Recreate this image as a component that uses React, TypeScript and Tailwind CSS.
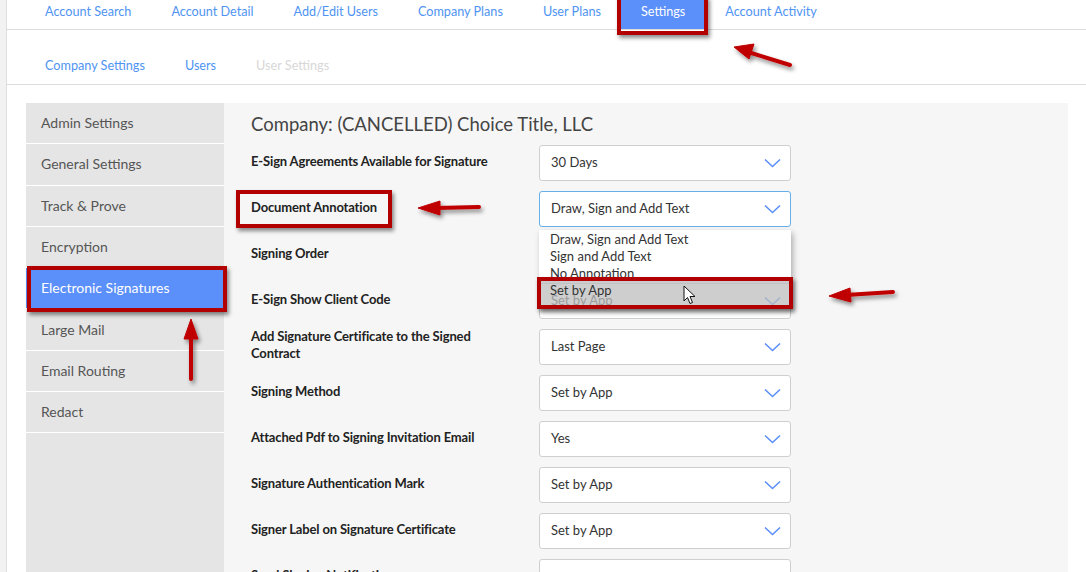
import React from 'react';

const topTabs = ['Account Search', 'Account Detail', 'Add/Edit Users', 'Company Plans', 'User Plans', 'Settings', 'Account Activity'];

const sideItems = [
  'Admin Settings',
  'General Settings',
  'Track & Prove',
  'Encryption',
  'Electronic Signatures',
  'Large Mail',
  'Email Routing',
  'Redact',
];

const rows = [
  { label: 'E-Sign Agreements Available for Signature', value: '30 Days' },
  { label: 'Document Annotation', value: 'Draw, Sign and Add Text', focused: true },
  { label: 'Signing Order', value: 'Set by App' },
  { label: 'E-Sign Show Client Code', value: 'Set by App' },
  { label: 'Add Signature Certificate to the Signed Contract', value: 'Last Page' },
  { label: 'Signing Method', value: 'Set by App' },
  { label: 'Attached Pdf to Signing Invitation Email', value: 'Yes' },
  { label: 'Signature Authentication Mark', value: 'Set by App' },
  { label: 'Signer Label on Signature Certificate', value: 'Set by App' },
  { label: 'Send Signing Notification', value: '' },
];

const Chevron = () => (
  <svg width="17" height="10" viewBox="0 0 17 10" fill="none">
    <polyline points="1,1.5 8.5,8.5 16,1.5" stroke="#5b8ff9" strokeWidth="1.6" />
  </svg>
);

const Select = ({ value, focused }: { value: string; focused?: boolean }) => (
  <div
    className={`w-[252px] h-[36px] bg-white rounded-[3px] border flex items-center justify-between pl-[11px] pr-[9px] text-[13px] text-[#333] ${
      focused ? 'border-[#66afe9]' : 'border-[#cfcfcf]'
    }`}
  >
    <span>{value}</span>
    <Chevron />
  </div>
);

const RedBox = ({ className }: { className: string }) => (
  <div className={`absolute border-[4px] border-[#b20000] shadow-[2px_3px_4px_rgba(0,0,0,0.45)] pointer-events-none ${className}`} />
);

export default function App() {
  return (
    <div className="relative w-[1086px] h-[572px] overflow-hidden flex bg-white font-['Lato','Open_Sans',sans-serif]">
      <div className="w-[7px] bg-[#f2f2f2] border-r border-[#dedede]" />
      <div className="flex-1 flex flex-col">
        <nav className="h-[30px] border-b border-[#dcdcdc] flex pl-[18px] text-[12.65px] text-[#4f94f2]">
          {topTabs.map((t) => (
            <div
              key={t}
              className={`px-5 flex items-center pb-[4px] ${t === 'Settings' ? 'bg-[#5b8ff9] text-white' : ''}`}
            >
              {t}
            </div>
          ))}
        </nav>
        <nav className="h-[55px] border-b border-[#dcdcdc] flex items-end pb-[8px] pl-[18px] text-[12.65px]">
          <div className="px-5 text-[#4f94f2]">Company Settings</div>
          <div className="px-5 text-[#4f94f2]">Users</div>
          <div className="px-5 text-[#d8d8d8]">User Settings</div>
        </nav>
        <div className="flex-1 flex pt-[18px] pl-[19px] pr-[18px] min-h-0">
          <aside className="w-[198px] bg-[#e5e5e5]">
            {sideItems.map((s) => (
              <div
                key={s}
                className={`h-[41.3px] flex items-center pl-[15px] pb-[1px] text-[14px] border-b border-white ${
                  s === 'Electronic Signatures' ? 'bg-[#5b8ff9] text-white' : 'text-[#555]'
                }`}
              >
                {s}
              </div>
            ))}
          </aside>
          <main className="flex-1 bg-[#f6f6f6] pl-[27px] pt-[8px]">
            <h1 className="text-[18.5px] leading-[26px] text-[#444] mb-[8px]">Company: (CANCELLED) Choice Title, LLC</h1>
            <div className="flex flex-col gap-[10px]">
              {rows.map((r) => (
                <div key={r.label} className="flex items-center">
                  <div className="w-[288px] pr-[36px] -mt-[4px] text-[13px] leading-[17px] font-bold text-[#222] tracking-[-0.15px]">
                    {r.label}
                  </div>
                  <Select value={r.value} focused={r.focused} />
                </div>
              ))}
            </div>
          </main>
        </div>
      </div>

      {/* open dropdown list */}
      <div className="absolute left-[539px] top-[230px] w-[252px] shadow-[2px_3px_6px_rgba(0,0,0,0.3)]">
        <div className="bg-white h-[50px] overflow-hidden pl-[11px] pt-[1px] text-[13px] leading-[17px] text-[#333]">
          <div>Draw, Sign and Add Text</div>
          <div>Sign and Add Text</div>
          <div>No Annotation</div>
        </div>
        <div className="h-[28px] bg-[#bdbdbd]/75 pl-[11px] text-[13px] leading-[17px] text-[#333] pt-[2px]">Set by App</div>
      </div>

      {/* mouse cursor */}
      <svg className="absolute left-[683px] top-[285px]" width="13" height="20" viewBox="0 0 13 20">
        <path d="M1 1 L1 16 L4.5 12.5 L7 18.5 L9.5 17.5 L7 11.5 L12 11.5 Z" fill="white" stroke="#111" strokeWidth="1" />
      </svg>

      {/* annotation boxes */}
      <RedBox className="left-[617px] top-[-4px] w-[91px] h-[39px]" />
      <RedBox className="left-[236px] top-[190px] w-[156px] h-[38px]" />
      <RedBox className="left-[27px] top-[266px] w-[200px] h-[46px]" />
      <RedBox className="left-[537px] top-[277px] w-[256px] h-[32px]" />

      {/* annotation arrows */}
      <svg className="absolute inset-0 pointer-events-none" width="1086" height="572" viewBox="0 0 1086 572">
        <defs>
          <filter id="sh" x="-20%" y="-20%" width="140%" height="140%">
            <feDropShadow dx="2" dy="3" stdDeviation="2" floodColor="#000" floodOpacity="0.45" />
          </filter>
        </defs>
        <g fill="#c00000" stroke="#c00000" filter="url(#sh)">
          <line x1="790" y1="65" x2="748" y2="52" strokeWidth="4" strokeLinecap="round" />
          <polygon points="734,47 754,44 749,59" strokeWidth="1" />
          <line x1="479" y1="207" x2="436" y2="208" strokeWidth="4" strokeLinecap="round" />
          <polygon points="418,208 440,201 440,215" strokeWidth="1" />
          <line x1="191" y1="379" x2="191" y2="336" strokeWidth="4" strokeLinecap="round" />
          <polygon points="191,319 184,339 198,339" strokeWidth="1" />
          <line x1="893" y1="292" x2="846" y2="295" strokeWidth="4" strokeLinecap="round" />
          <polygon points="829,296 850,288 851,302" strokeWidth="1" />
        </g>
      </svg>
    </div>
  );
}
